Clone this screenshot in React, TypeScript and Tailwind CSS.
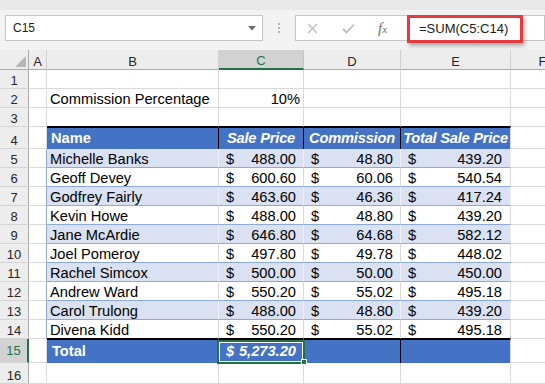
import React from 'react';

// commission sheet, rows 5-14
const sales = [
    { name: 'Michelle Banks', sale: '488.00', comm: '48.80', total: '439.20' },
    { name: 'Geoff Devey', sale: '600.60', comm: '60.06', total: '540.54' },
    { name: 'Godfrey Fairly', sale: '463.60', comm: '46.36', total: '417.24' },
    { name: 'Kevin Howe', sale: '488.00', comm: '48.80', total: '439.20' },
    { name: 'Jane McArdie', sale: '646.80', comm: '64.68', total: '582.12' },
    { name: 'Joel Pomeroy', sale: '497.80', comm: '49.78', total: '448.02' },
    { name: 'Rachel Simcox', sale: '500.00', comm: '50.00', total: '450.00' },
    { name: 'Andrew Ward', sale: '550.20', comm: '55.02', total: '495.18' },
    { name: 'Carol Trulong', sale: '488.00', comm: '48.80', total: '439.20' },
    { name: 'Divena Kidd', sale: '550.20', comm: '55.02', total: '495.18' },
];

const COLS = 'grid grid-cols-[29px_18px_172px_85px_97px_110px_64px]';
const rowHead = 'flex items-end justify-center bg-[#ededed] border-r border-b border-r-[#ababab] border-b-[#d5d5d5] text-[13px] leading-[15px] text-[#262626]';
const plain = 'flex items-end bg-white border-r border-b border-[#dadada] text-[14.67px] leading-[15px] whitespace-nowrap overflow-hidden';

const Money: React.FC<{ v: string }> = ({ v }) => (
    <>
        <span>$</span>
        <span>{v}</span>
    </>
);

const App: React.FC = () => {
    return (
        <div className="w-[545px] h-[384px] overflow-hidden bg-[#f3f3f3] font-['Liberation_Sans',Arial,sans-serif] text-black">
            {/* title strip */}
            <div className="h-[10px] bg-[#e9e9e9]" />

            {/* name box + formula bar */}
            <div className="relative h-[40px] flex items-start pt-[5px]">
                <div className="ml-[5px] w-[258px] h-[26px] bg-white border border-[#c6c6c6] flex items-center justify-between pl-[7px] pr-[6px] text-[12px] text-[#222]">
                    <span>C15</span>
                    <svg width="8" height="5" viewBox="0 0 8 5">
                        <polygon points="0,0 8,0 4,4.5" fill="#6f6f6f" />
                    </svg>
                </div>
                <div className="w-[32px] h-[26px] flex flex-col items-center justify-center gap-[2px]">
                    <div className="w-[2px] h-[2px] bg-[#b3b3b3]" />
                    <div className="w-[2px] h-[2px] bg-[#b3b3b3]" />
                    <div className="w-[2px] h-[2px] bg-[#b3b3b3]" />
                </div>
                <div className="w-[250px] h-[26px] bg-white border border-[#c6c6c6] flex items-center">
                    <svg className="ml-[11px]" width="11" height="11" viewBox="0 0 11 11">
                        <path d="M1 1 L10 10 M10 1 L1 10" stroke="#bdbdbd" strokeWidth="1.4" />
                    </svg>
                    <svg className="ml-[24px]" width="13" height="11" viewBox="0 0 13 11">
                        <path d="M1 6 L4.5 9.5 L12 1.5" stroke="#bdbdbd" strokeWidth="1.8" fill="none" />
                    </svg>
                    <span className="ml-[23px] font-['Liberation_Serif',serif] italic text-[15px] leading-none text-[#6b6b6b]">
                        f<span className="text-[11px]">x</span>
                    </span>
                </div>
                <div className="absolute left-[407px] top-[5px] w-[116px] h-[28px] border-[3px] border-[#e8393f] shadow-[2px_3px_4px_rgba(0,0,0,0.28)] flex items-center pl-[9px] text-[13px] text-[#222]">
                    =SUM(C5:C14)
                </div>
            </div>

            {/* column headers */}
            <div className={`${COLS} h-[20px]`}>
                <div className="relative bg-[#ededed] border-r border-b border-r-[#ababab] border-b-[#ababab]">
                    <svg className="absolute right-[2px] bottom-[2px]" width="11" height="11" viewBox="0 0 11 11">
                        <polygon points="11,0 11,11 0,11" fill="#b7b7b7" />
                    </svg>
                </div>
                {['A', 'B', 'C', 'D', 'E', 'F'].map((l) =>
                    l === 'C' ? (
                        <div key={l} className="flex items-end justify-center bg-[#d2d2d2] border-r border-b-2 border-r-[#c4c4c4] border-b-[#217346] text-[13px] leading-[15px] text-[#217346]">
                            {l}
                        </div>
                    ) : (
                        <div key={l} className="flex items-end justify-center bg-[#ededed] border-r border-b border-r-[#d0d0d0] border-b-[#ababab] text-[13px] leading-[15px] text-[#262626]">
                            {l}
                        </div>
                    )
                )}
            </div>

            {/* row 1 */}
            <div className={`${COLS} h-[19px]`}>
                <div className={rowHead}>1</div>
                <div className={plain} />
                <div className={plain} />
                <div className={plain} />
                <div className={plain} />
                <div className={plain} />
                <div className={plain} />
            </div>

            {/* row 2 */}
            <div className={`${COLS} h-[19px]`}>
                <div className={rowHead}>2</div>
                <div className={plain} />
                <div className={`${plain} pl-[3px]`}>Commission Percentage</div>
                <div className={`${plain} justify-end pr-[3px]`}>10%</div>
                <div className={plain} />
                <div className={plain} />
                <div className={plain} />
            </div>

            {/* row 3 */}
            <div className={`${COLS} h-[19px]`}>
                <div className={rowHead}>3</div>
                <div className={plain} />
                <div className="bg-white border-r border-b border-r-[#dadada] border-b-black" />
                <div className="bg-white border-r border-b border-r-[#dadada] border-b-black" />
                <div className="bg-white border-r border-b border-r-[#dadada] border-b-black" />
                <div className="bg-white border-r border-b border-r-[#dadada] border-b-black" />
                <div className={plain} />
            </div>

            {/* row 4 - table header */}
            <div className={`${COLS} h-[22px]`}>
                <div className={rowHead}>4</div>
                <div className={plain} />
                <div className="flex items-center pl-[4px] bg-[#4472c4] border-t border-r border-t-black border-r-black text-white font-bold text-[14.67px] leading-[15px]">
                    Name
                </div>
                <div className="flex items-center justify-center bg-[#4472c4] border-t border-r border-t-black border-r-black text-white font-bold italic text-[14.67px] leading-[15px] tracking-[-0.2px] whitespace-nowrap overflow-hidden">
                    Sale Price
                </div>
                <div className="flex items-center justify-center bg-[#4472c4] border-t border-r border-t-black border-r-black text-white font-bold italic text-[14.67px] leading-[15px] tracking-[-0.2px] whitespace-nowrap overflow-hidden">
                    Commission
                </div>
                <div className="flex items-center justify-center bg-[#4472c4] border-t border-r border-t-black border-r-[#dadada] text-white font-bold italic text-[14.67px] leading-[15px] tracking-[-0.25px] whitespace-nowrap overflow-hidden">
                    Total Sale Price
                </div>
                <div className={plain} />
            </div>

            {/* rows 5-14 */}
            {sales.map((s, i) => {
                const band = i % 2 === 0;
                const last = i === sales.length - 1;
                const cell = band
                    ? 'flex items-end bg-[#d9e1f2] border-r border-b border-r-[#eef0f4] text-[14.67px] leading-[15px] whitespace-nowrap overflow-hidden'
                    : 'flex items-end bg-white border-r border-b border-r-[#dadada] text-[14.67px] leading-[15px] whitespace-nowrap overflow-hidden';
                const bottom = last ? 'border-b-black' : 'border-b-[#8ea9db]';
                return (
                    <div key={s.name} className={`${COLS} h-[19px]`}>
                        <div className={rowHead}>{i + 5}</div>
                        <div className="bg-white border-r border-b border-r-[#8ea9db] border-b-[#dadada]" />
                        <div className={`${cell} ${bottom} pl-[3px]`}>{s.name}</div>
                        <div className={`${cell} ${bottom} justify-between px-[7px]`}>
                            <Money v={s.sale} />
                        </div>
                        <div className={`${cell} ${bottom} justify-between px-[7px]`}>
                            <Money v={s.comm} />
                        </div>
                        <div className={`${cell} ${bottom} justify-between pl-[7px] pr-[8px]`}>
                            <Money v={s.total} />
                        </div>
                        <div className={plain} />
                    </div>
                );
            })}

            {/* row 15 - totals */}
            <div className={`${COLS} h-[24px]`}>
                <div className="flex items-center justify-center bg-[#d2d2d2] border-r-2 border-b border-r-[#217346] border-b-[#d5d5d5] text-[13px] leading-[15px] text-[#217346]">
                    15
                </div>
                <div className="bg-white border-r border-b border-[#dadada]" />
                <div className="flex items-center pl-[5px] bg-[#4472c4] border-t border-r border-t-black border-r-[#4472c4] text-white font-bold text-[14.67px] leading-[15px]">
                    Total
                </div>
                <div className="relative flex items-center justify-between px-[7px] bg-[#4472c4] border-t border-r border-t-black border-r-[#4472c4] text-white font-bold italic text-[14.67px] leading-[15px] whitespace-nowrap">
                    <span>$</span>
                    <span>5,273.20</span>
                    <div className="absolute -left-[2px] top-0 w-[88px] h-[24px] border-2 border-[#217346] shadow-[inset_0_0_0_1px_#ffffff]" />
                    <div className="absolute left-[82px] top-[19px] w-[6px] h-[6px] bg-[#217346] border border-white" />
                </div>
                <div className="bg-[#4472c4] border-t border-r border-t-black border-r-black" />
                <div className="bg-[#4472c4] border-t border-r border-t-black border-r-[#dadada]" />
                <div className={plain} />
            </div>

            {/* row 16 */}
            <div className={`${COLS} h-[21px]`}>
                <div className={rowHead}>16</div>
                <div className={plain} />
                <div className={plain} />
                <div className={plain} />
                <div className={plain} />
                <div className={plain} />
                <div className={plain} />
            </div>
        </div>
    );
};

export default App;
